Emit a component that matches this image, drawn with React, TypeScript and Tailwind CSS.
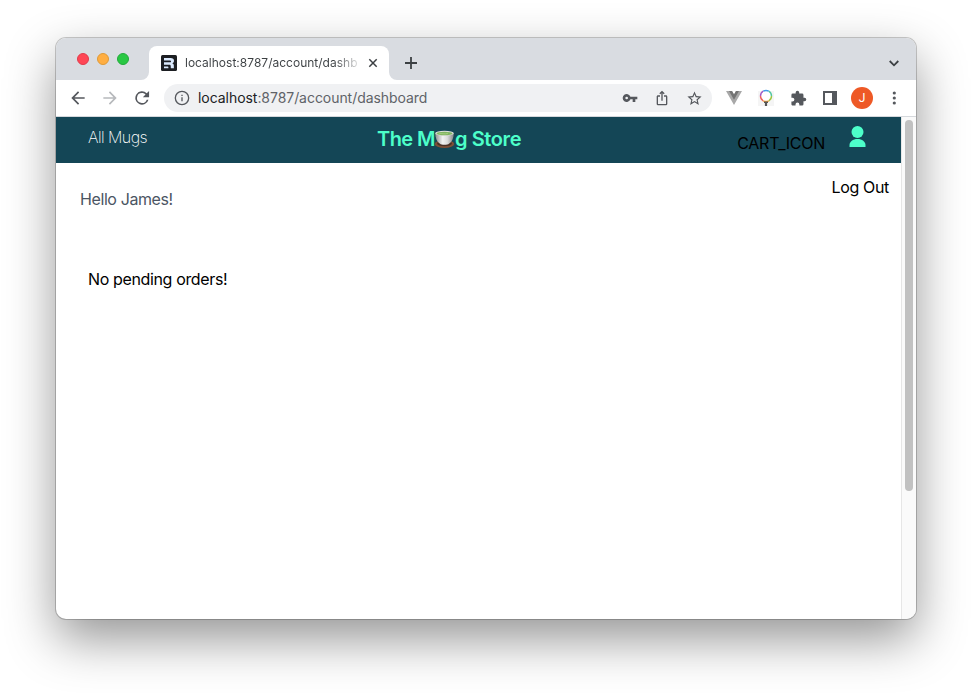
import type { ReactNode } from "react";

function Icon({ size, className = "", children }: { size: number; className?: string; children: ReactNode }) {
  return (
    <svg width={size} height={size} viewBox="0 0 24 24" fill="currentColor" className={`block shrink-0 ${className}`}>
      {children}
    </svg>
  );
}

function TabCorner({ flip = false }: { flip?: boolean }) {
  return (
    <svg width="8" height="8" viewBox="0 0 8 8" className={`block self-end ${flip ? "-scale-x-100" : ""}`}>
      <path d="M8 0v8H0a8 8 0 0 0 8-8z" fill="#fff" />
    </svg>
  );
}

function RemixLogo() {
  return (
    <svg width="16" height="16" viewBox="0 0 16 16" className="block shrink-0">
      <rect width="16" height="16" rx="1.5" fill="#1c1e22" />
      <path d="M3 3h6.6c2.2 0 3.4 1 3.4 2.8 0 1.4-.8 2.2-1.9 2.5 1.1.2 1.6.9 1.7 2l.1 2.9H9.8l-.1-2.1c0-.9-.4-1.3-1.3-1.3H3V7.3h5.6c1 0 1.4-.3 1.4-.9s-.4-.9-1.4-.9H3z" fill="#dbeafe" />
      <path d="M3 11.5h3.7c.5 0 .7.3.7.7v1H3z" fill="#dbeafe" />
    </svg>
  );
}

function Teacup() {
  return (
    <svg width="21" height="20" viewBox="0 0 21 20" className="block shrink-0">
      <defs>
        <linearGradient id="cup">
          <stop offset="0" stopColor="#8d8e90" />
          <stop offset=".4" stopColor="#f2f2f2" />
          <stop offset=".65" stopColor="#dcdcdc" />
          <stop offset="1" stopColor="#858687" />
        </linearGradient>
      </defs>
      <ellipse cx="10.5" cy="14" rx="9.800" ry="4" fill="#7d4e36" />
      <ellipse cx="10.5" cy="13.500" rx="7.500" ry="2.800" fill="#4a3025" />
      <path d="M1.200 3.200C1.400 8 2.800 11.600 6 13.800c1.200 1.300 7.800 1.300 9 0 3.200-2.200 4.600-5.800 4.800-10.600z" fill="url(#cup)" />
      <ellipse cx="10.5" cy="3.200" rx="9.300" ry="2.500" fill="#dedfdd" />
      <ellipse cx="10.5" cy="3.500" rx="8" ry="1.800" fill="#83b563" />
      <path d="M5 3.900c3-1.200 5 1 9-.6" stroke="#b0d88a" strokeWidth=".7" fill="none" />
    </svg>
  );
}

function TabStrip() {
  return (
    <div className="flex h-[42px] bg-[#d9dce1]">
      <div className="flex gap-2 pl-[21px] pt-[15px]">
        <span className="size-3 rounded-full border border-[#e13b4b] bg-[#ff4655]" />
        <span className="size-3 rounded-full border border-[#df9a37] bg-[#ffae42]" />
        <span className="size-3 rounded-full border border-[#23ab3b] bg-[#29c843]" />
      </div>
      <div className="ml-3 flex">
        <TabCorner />
        <div className="mt-2 flex h-[34px] w-[240px] items-center rounded-t-lg bg-white pl-3">
          <RemixLogo />
          <div className="ml-2 w-[175px] whitespace-nowrap bg-gradient-to-r from-[#3c4043] from-85% to-[#3c4043]/10 bg-clip-text text-[12px] leading-5 tracking-[0.01px] text-transparent">
            localhost:8787/account/dashb
          </div>
          <svg width="10" height="10" viewBox="0 0 10 10" className="ml-2 block" stroke="#3c4043" strokeWidth="1.5">
            <path d="M1.300 1.300l7.400 7.400M8.700 1.300L1.300 8.700" />
          </svg>
        </div>
        <TabCorner flip />
      </div>
      <svg width="12" height="12" viewBox="0 0 12 12" className="ml-2 mt-[19px]" stroke="#3c4043" strokeWidth="1.8">
        <path d="M6 0v12M0 6h12" />
      </svg>
      <svg width="10" height="7" viewBox="0 0 10 7" className="ml-auto mr-[17px] mt-[22px]" fill="none" stroke="#3c4043" strokeWidth="1.8">
        <path d="M.7 1L5 5.3 9.3 1" />
      </svg>
    </div>
  );
}

function Toolbar() {
  return (
    <div className="flex h-[37px] items-center border-b border-[#d5d8dc] bg-white pl-3 text-[#55585d]">
      <Icon size={20}><path d="M20 11H7.800l5.600-5.600L12 4l-8 8 8 8 1.400-1.400L7.800 13H20v-2z" /></Icon>
      <Icon size={20} className="ml-3 text-[#b7b9bc]"><path d="M12 4l-1.400 1.400 5.600 5.600H4v2h12.200l-5.600 5.600L12 20l8-8-8-8z" /></Icon>
      <Icon size={20} className="ml-3"><path d="M17.650 6.350A8 8 0 1 0 19.730 14h-2.080A6 6 0 1 1 12 6c1.660 0 3.140.69 4.220 1.780L13 11h7.500V3.500l-2.850 2.850z" /></Icon>
      <div className="ml-3 flex h-7 w-[548px] items-center rounded-full bg-[#f0f1f3] pl-[10px] pr-[9px]">
        <Icon size={16}><path d="M11 7h2v2h-2zm0 4h2v6h-2zm1-10a11 11 0 1 0 0 22 11 11 0 0 0 0-22zm0 20a9 9 0 1 1 0-18 9 9 0 0 1 0 18z" /></Icon>
        <span className="ml-2 text-[14px] leading-5 tracking-[-0.05px] text-[#5f6368]">
          <span className="text-[#202124]">localhost</span>:8787/account/dashboard
        </span>
        <Icon size={16} className="ml-auto"><path d="M12.650 10A6 6 0 1 0 12.650 14H16v4h4v-4h3v-4H12.650zM7 14a2 2 0 1 1 0-4 2 2 0 0 1 0 4z" /></Icon>
        <Icon size={16} className="ml-4"><path d="M16 5l-1.400 1.400L13 4.800V16h-2V4.800L9.400 6.400 8 5l4-4 4 4zm4 5v11a2 2 0 0 1-2 2H6a2 2 0 0 1-2-2V10c0-1.100.9-2 2-2h3v2H6v11h12V10h-3V8h3a2 2 0 0 1 2 2z" /></Icon>
        <Icon size={17} className="ml-4"><path d="M22 9.240l-7.190-.62L12 2 9.190 8.630 2 9.240l5.460 4.730L5.820 21 12 17.270 18.180 21l-1.630-7.030L22 9.240zM12 15.400l-3.760 2.270 1-4.280-3.320-2.880 4.380-.38L12 6.100l1.710 4.040 4.380.38-3.320 2.880 1 4.280L12 15.400z" /></Icon>
      </div>
      <svg width="16" height="14" viewBox="0 0 16 14" className="ml-[14px] shrink-0">
        <path d="M0 0h6l2 3.500L10 0h6L8 14z" fill="#a8a8a8" />
        <path d="M3 0h3l2 3.500L10 0h3L8 8.700z" fill="#747474" />
      </svg>
      <svg width="16" height="18" viewBox="0 0 16 18" className="ml-4 shrink-0" fill="none" strokeWidth="1.300">
        <path d="M0 2h16v15H0z" fill="#f5f5f5" />
        <circle cx="8" cy="7" r="5.300" fill="#fff" />
        <g transform="translate(-.8 -.7) scale(1.100)">
          <path d="M3 7a5 5 0 0 1 2.500-4.330" stroke="#a45cc5" />
          <path d="M5.500 2.670A5 5 0 0 1 10.500 2.670" stroke="#439be8" />
          <path d="M10.500 2.670A5 5 0 0 1 13 7" stroke="#54c6a4" />
          <path d="M13 7a5 5 0 0 1-2.500 4.330" stroke="#9fc543" />
          <path d="M10.500 11.330a5 5 0 0 1-5 0" stroke="#f4a53c" />
          <path d="M5.500 11.330A5 5 0 0 1 3 7" stroke="#ed625d" />
        </g>
        <path d="M6 13.300h4" stroke="#555" strokeWidth="1.500" />
        <path d="M8 13v4" stroke="#555" strokeWidth="2.200" />
      </svg>
      <Icon size={17} className="ml-4"><path d="M20.500 11H19V7a2 2 0 0 0-2-2h-4V3.500a2.500 2.500 0 0 0-5 0V5H4a2 2 0 0 0-2 2v3.800h1.500a2.700 2.700 0 0 1 0 5.400H2V20c0 1.100.9 2 2 2h3.800v-1.500a2.700 2.700 0 0 1 5.400 0V22H17a2 2 0 0 0 2-2v-4h1.500a2.500 2.500 0 0 0 0-5z" /></Icon>
      <svg width="14" height="14" viewBox="0 0 14 14" className="ml-4 shrink-0"><path fill="currentColor" fillRule="evenodd" d="M0 0h14v14H0zM2 2v10h7V2z" /></svg>
      <div className="ml-[14px] flex size-[22px] shrink-0 items-center justify-center rounded-full bg-[#ee5926] font-['Roboto',sans-serif] text-[12px] text-white">J</div>
      <svg width="4" height="14" viewBox="0 0 4 14" className="ml-[19px] shrink-0" fill="currentColor"><circle cx="2.300" cy="2" r="1.600" /><circle cx="2.300" cy="7" r="1.600" /><circle cx="2.300" cy="12" r="1.600" /></svg>
    </div>
  );
}

function StorePage() {
  return (
    <main className="w-[845px] text-[16px] leading-6 text-black">
      <header className="flex h-[46px] items-start bg-[#144656] pl-8 pr-[34px]">
        <a className="mt-2 w-[289px] font-extralight tracking-[-0.55px] text-white">All Mugs</a>
        <h1 className="mt-2 flex text-[20px] font-semibold leading-7 text-[#4dffca]">
          <span className="tracking-[-0.55px]">The M</span>
          <span className="-ml-px mt-[5px]"><Teacup /></span>
          <span className="tracking-[-0.4px]">g Store</span>
        </h1>
        <span className="ml-auto mt-[14px] tracking-[-0.28px]">CART_ICON</span>
        <svg width="18" height="23" viewBox="0 0 18 23" className="ml-6 mt-[8px] shrink-0" fill="#4dffca">
          <circle cx="8.500" cy="7" r="6" />
          <path d="M.500 22v-2c0-3.300 3.400-6 8-6s8 2.700 8 6v2z" />
        </svg>
      </header>
      <div className="flex items-start justify-between pl-6 pr-3">
        <p className="mt-6 tracking-[-0.4px] text-[#4b5563]">Hello James!</p>
        <button className="mt-3 tracking-[-0.35px]">Log Out</button>
      </div>
      <p className="ml-8 mt-14 tracking-[-0.36px]">No pending orders!</p>
    </main>
  );
}

export default function App() {
  return (
    <div className="h-[693px] w-[972px] overflow-hidden bg-white pl-14 pt-[38px] font-['Inter','Liberation_Sans',sans-serif]">
      <div className="flex h-[581px] w-[860px] flex-col overflow-hidden rounded-[10px] bg-white shadow-[0_0_0_1px_rgba(0,0,0,0.2),0_20px_50px_rgba(0,0,0,0.42)]">
        <TabStrip />
        <Toolbar />
        <div className="flex flex-1">
          <StorePage />
          <div className="w-[15px] border-l border-[#e6e6e6] bg-[#fafafa] pl-[3px] pt-[3px]">
            <div className="h-[371px] w-2 rounded-full bg-[#c1c1c1]" />
          </div>
        </div>
      </div>
    </div>
  );
}
